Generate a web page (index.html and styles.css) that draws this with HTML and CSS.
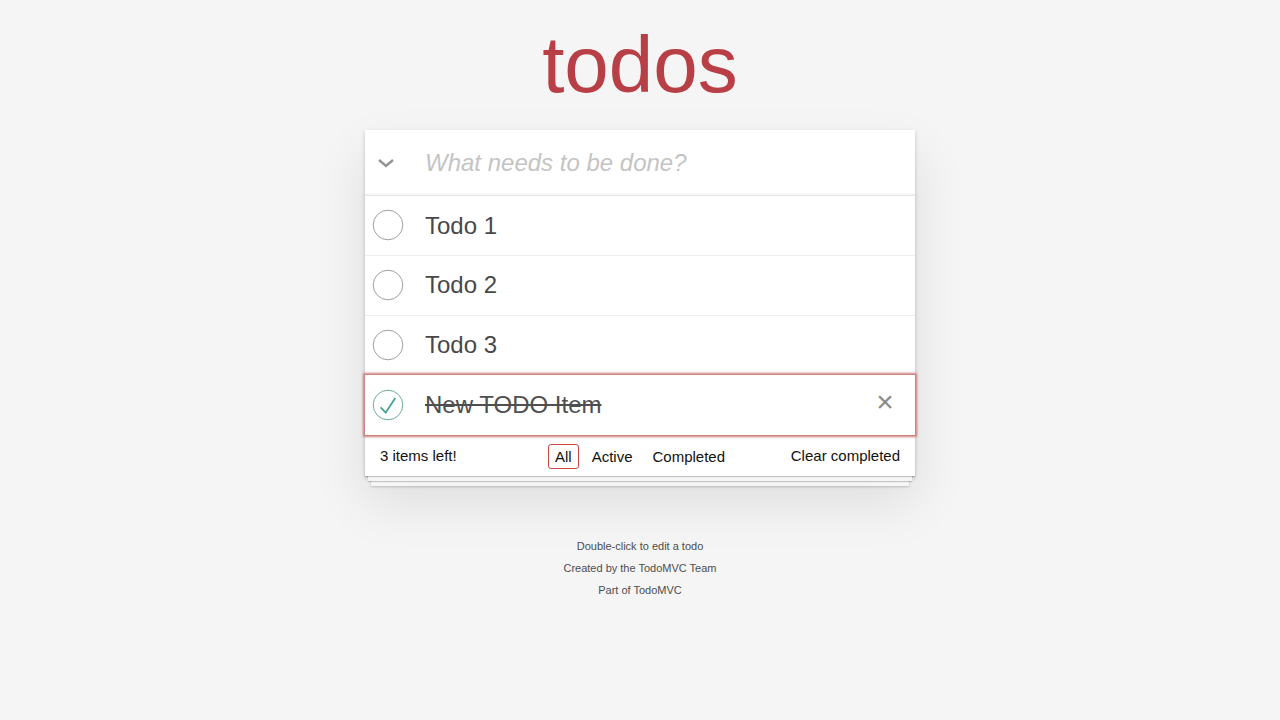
FILE: index.html
```html
<!DOCTYPE html>
<html lang="en">
<head>
<meta charset="utf-8">
<title>Todos</title>
<link rel="stylesheet" href="styles.css">
</head>
<body>
<div class="page">
  <h1 class="title">todos</h1>
  <section class="todoapp">
    <div class="header">
      <label class="toggle-all">
        <svg width="18" height="10" viewBox="0 0 18 10"><polyline points="2,2 9,8 16,2" fill="none" stroke="#949494" stroke-width="2.4"/></svg>
      </label>
      <input class="new-todo" placeholder="What needs to be done?">
    </div>
    <ul class="todo-list">
      <li class="item">
        <span class="toggle"><svg width="32" height="32" viewBox="0 0 32 32"><circle cx="16" cy="16" r="14.8" fill="none" stroke="#949494" stroke-width="0.9"/></svg></span>
        <span class="label">Todo 1</span>
      </li>
      <li class="item">
        <span class="toggle"><svg width="32" height="32" viewBox="0 0 32 32"><circle cx="16" cy="16" r="14.8" fill="none" stroke="#949494" stroke-width="0.9"/></svg></span>
        <span class="label">Todo 2</span>
      </li>
      <li class="item">
        <span class="toggle"><svg width="32" height="32" viewBox="0 0 32 32"><circle cx="16" cy="16" r="14.8" fill="none" stroke="#949494" stroke-width="0.9"/></svg></span>
        <span class="label">Todo 3</span>
      </li>
      <li class="item completed">
        <span class="toggle"><svg width="32" height="32" viewBox="0 0 32 32"><circle cx="16" cy="16" r="14.8" fill="none" stroke="#59A193" stroke-width="0.9"/><g transform="translate(1.2 1.2) scale(0.296)"><path fill="#3EA390" d="M72 25L42 71 27 56l-4 4 20 20 34-52z"/></g></svg></span>
        <span class="label">New TODO Item</span>
        <span class="destroy">×</span>
      </li>
    </ul>
    <footer class="footer">
      <span class="todo-count">3 items left!</span>
      <ul class="filters">
        <li><a class="selected">All</a></li>
        <li><a>Active</a></li>
        <li><a>Completed</a></li>
      </ul>
      <span class="clear-completed">Clear completed</span>
    </footer>
  </section>
  <footer class="info">
    <p>Double-click to edit a todo</p>
    <p>Created by the TodoMVC Team</p>
    <p>Part of TodoMVC</p>
  </footer>
</div>
</body>
</html>
```
FILE: styles.css
```css
html, body {
  margin: 0;
  padding: 0;
}
body {
  font-family: "Liberation Sans", Arial, sans-serif;
  font-size: 14px;
  line-height: 1.4em;
  background: #f5f5f5;
  color: #111111;
}
.page {
  width: 550px;
  margin: 0 auto;
}
.title {
  margin: 0;
  padding-top: 25px;
  height: 80px;
  margin-bottom: 25px;
  font-size: 80px;
  line-height: 80px;
  font-weight: 400;
  text-align: center;
  color: #b83f45;
}
.todoapp {
  background: #fff;
  margin: 0 0 40px 0;
  position: relative;
  box-shadow: 0 2px 4px 0 rgba(0, 0, 0, 0.2), 0 25px 50px 0 rgba(0, 0, 0, 0.1);
}
.header {
  display: flex;
  height: 65px;
  box-shadow: inset 0 -2px 1px rgba(0, 0, 0, 0.03);
  border-bottom: 1px solid #e6e6e6;
}
.toggle-all {
  width: 45px;
  flex: none;
  display: flex;
  align-items: center;
  justify-content: center;
  padding-top: 1px;
}
.toggle-all svg {
  margin-left: -3px;
}
.new-todo {
  flex: 1;
  min-width: 0;
  margin: 0;
  border: none;
  outline: none;
  background: transparent;
  padding: 16px 16px 16px 15px;
  font-family: inherit;
  font-size: 24px;
  line-height: 1.4em;
  color: #484848;
}
.new-todo::placeholder {
  font-style: italic;
  color: #c4c4c4;
}
.todo-list {
  margin: 0;
  padding: 0;
  list-style: none;
}
.item {
  display: flex;
  align-items: center;
  position: relative;
  font-size: 24px;
  border-bottom: 1px solid #ededed;
  height: 58.8px;
}
.toggle {
  width: 60px;
  flex: none;
  display: flex;
  align-items: center;
  padding-left: 7px;
  box-sizing: border-box;
  height: 100%;
}
.toggle svg {
  display: block;
}
.label {
  flex: 1;
  line-height: 1.2;
  color: #484848;
  padding-top: 1px;
}
.completed {
  box-shadow: 0 0 2px 2px #cf7d7d;
  z-index: 1;
  border-bottom-color: transparent;
}
.completed .label {
  text-decoration: line-through;
  color: #4f4f4f;
}
.destroy {
  width: 40px;
  margin-right: 10px;
  text-align: center;
  font-size: 30px;
  line-height: 1;
  color: #8a8a8a;
  padding-bottom: 6px;
}
.footer {
  position: relative;
  display: grid;
  grid-template-columns: 1fr auto 1fr;
  grid-template-rows: 20px;
  align-items: center;
  padding: 10px 15px;
  height: 20px;
  font-size: 15px;
  border-top: 1px solid #e6e6e6;
}
.footer::before {
  content: "";
  position: absolute;
  right: 0;
  bottom: 0;
  left: 0;
  height: 50px;
  overflow: hidden;
  pointer-events: none;
  box-shadow: 0 1px 1px rgba(0, 0, 0, 0.2), 0 8px 0 -3px #f6f6f6, 0 9px 1px -3px rgba(0, 0, 0, 0.2), 0 16px 0 -6px #f6f6f6, 0 17px 2px -6px rgba(0, 0, 0, 0.2);
}
.todo-count {
  line-height: 20px;
}
.filters {
  margin: 0;
  padding: 0;
  list-style: none;
  display: flex;
}
.filters a {
  display: block;
  margin: 3px;
  padding: 0 6px;
  line-height: 23px;
  border: 1px solid transparent;
  border-radius: 3px;
  color: #111;
}
.filters a.selected {
  border-color: #ce4646;
}
.clear-completed {
  text-align: right;
  line-height: 19px;
  margin-top: -1px;
}
.info {
  margin: 65px auto 0;
  color: #4d4d4d;
  font-size: 11px;
  text-align: center;
}
.info p {
  line-height: 1;
  margin: 11px 0;
}
```
